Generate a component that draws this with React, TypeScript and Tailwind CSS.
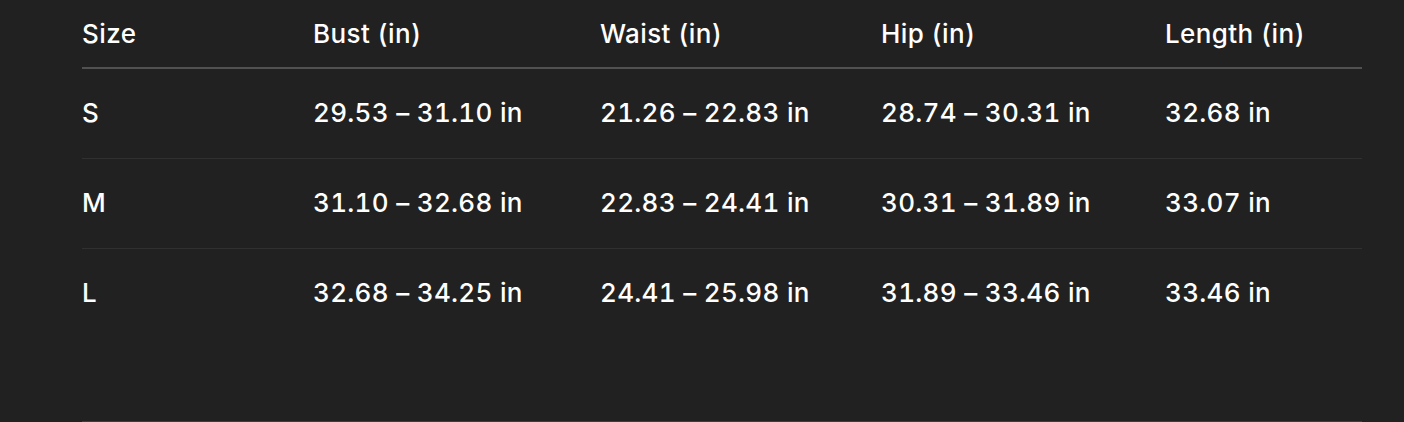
const headers = ['Size', 'Bust (in)', 'Waist (in)', 'Hip (in)', 'Length (in)'];

const rows = [
  ['S', '29.53 – 31.10 in', '21.26 – 22.83 in', '28.74 – 30.31 in', '32.68 in'],
  ['M', '31.10 – 32.68 in', '22.83 – 24.41 in', '30.31 – 31.89 in', '33.07 in'],
  ['L', '32.68 – 34.25 in', '24.41 – 25.98 in', '31.89 – 33.46 in', '33.46 in'],
];

export default function App() {
  return (
    <div
      className="w-[1404px] h-[422px] bg-[#212121] overflow-hidden text-white"
      style={{ fontFamily: 'Inter, "Noto Sans", sans-serif' }}
    >
      <div className="mx-[82px] w-[1280px]">
        <table className="w-full table-fixed border-collapse text-left">
          <colgroup>
            <col className="w-[231px]" />
            <col className="w-[287px]" />
            <col className="w-[281px]" />
            <col className="w-[284px]" />
            <col />
          </colgroup>
          <thead>
            <tr className="h-[68px] border-b-2 border-[#515151]">
              {headers.map((h) => (
                <th key={h} className="p-0 align-middle text-[26px] font-[550] tracking-[0.4px] tabular-nums">
                  {h}
                </th>
              ))}
            </tr>
          </thead>
          <tbody>
            {rows.map((row, i) => (
              <tr
                key={row[0]}
                className={`h-[90px] ${i < rows.length - 1 ? 'border-b border-[#303030]' : ''}`}
              >
                {row.map((cell, j) => (
                  <td key={j} className="p-0 pb-[2px] align-middle text-[26px] font-[550] tracking-[0.3px] tabular-nums">
                    {cell}
                  </td>
                ))}
              </tr>
            ))}
          </tbody>
        </table>
        <div className="mt-[83px] h-[2px] bg-[#3d3d3d]" />
      </div>
    </div>
  );
}
